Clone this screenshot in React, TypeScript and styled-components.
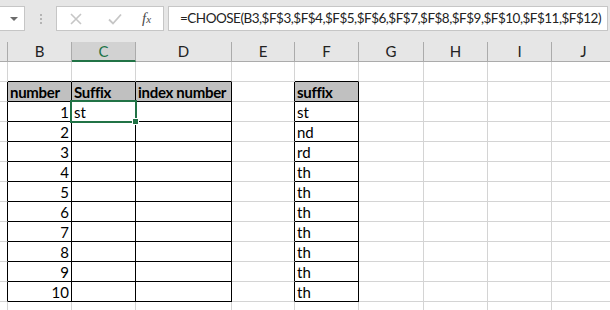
import React from "react";
import styled, { createGlobalStyle } from "styled-components";

const GlobalStyle = createGlobalStyle`
  body {
    margin: 0;
    background: #ffffff;
    font-family: Lato, "Liberation Sans", sans-serif;
    overflow: hidden;
  }
`;

interface ColumnType {
  name: string;
  width: number;
}

const columns: ColumnType[] = [
  { name: "", width: 8 },
  { name: "B", width: 64 },
  { name: "C", width: 64 },
  { name: "D", width: 96 },
  { name: "E", width: 63 },
  { name: "F", width: 64 },
  { name: "G", width: 65 },
  { name: "H", width: 64 },
  { name: "I", width: 64 },
  { name: "J", width: 64 },
];

const suffixes = ["st", "nd", "rd", "th", "th", "th", "th", "th", "th", "th"];

// rows of the sheet, index 0 is the empty row above the table
const rows: string[][] = [
  [],
  ["", "number", "Suffix", "index number", "", "suffix"],
  ...suffixes.map((s, i) => ["", String(i + 1), i === 0 ? "st" : "", "", "", s]),
  [],
];

const tableCols = [1, 2, 3, 5];
const inTable = (r: number, c: number) =>
  r >= 1 && r <= 11 && tableCols.includes(c);

const formula =
  "=CHOOSE(B3,$F$3,$F$4,$F$5,$F$6,$F$7,$F$8,$F$9,$F$10,$F$11,$F$12)";

const App: React.FC = () => {
  return (
    <S.Window>
      <GlobalStyle />
      <S.FormulaBar>
        <S.NameBox>
          <S.DropArrow />
        </S.NameBox>
        <S.Grip>
          <i />
          <i />
          <i />
        </S.Grip>
        <S.ButtonBox>
          <svg width="12" height="12" viewBox="0 0 12 12">
            <path d="M1 1L11 11M11 1L1 11" stroke="#c6c6c6" strokeWidth="1.6" />
          </svg>
          <svg width="14" height="12" viewBox="0 0 14 12">
            <path d="M1 6.5L5 10.5L13 1.5" stroke="#c6c6c6" strokeWidth="1.8" fill="none" />
          </svg>
          <S.Fx>
            f<sub>x</sub>
          </S.Fx>
        </S.ButtonBox>
        <S.FormulaInput>{formula}</S.FormulaInput>
      </S.FormulaBar>
      <S.HeaderRow>
        {columns.map((col, c) => (
          <S.ColumnHeader key={c} $width={col.width} $selected={c === 2}>
            {col.name}
          </S.ColumnHeader>
        ))}
      </S.HeaderRow>
      <S.Sheet>
        {rows.map((row, r) => (
          <S.Row key={r}>
            {columns.map((col, c) => {
              const value = row[c] || "";
              const right = inTable(r, c) || inTable(r, c + 1);
              const bottom = inTable(r, c) || inTable(r + 1, c);
              const isNumber = /^\d+$/.test(value);
              return (
                <S.Cell
                  key={c}
                  $width={col.width}
                  $right={right}
                  $bottom={bottom}
                  $head={r === 1 && inTable(r, c)}
                  $number={isNumber}
                >
                  {value}
                  {r === 2 && c === 2 && (
                    <S.Selection>
                      <S.Handle />
                    </S.Selection>
                  )}
                </S.Cell>
              );
            })}
          </S.Row>
        ))}
      </S.Sheet>
    </S.Window>
  );
};

const S = {
  Window: styled.div`
    width: 610px;
    height: 310px;
    overflow: hidden;
    background: #ffffff;
  `,
  FormulaBar: styled.div`
    display: flex;
    align-items: flex-start;
    height: 42px;
    padding-top: 6px;
    box-sizing: border-box;
    background: #e6e6e6;
  `,
  NameBox: styled.div`
    width: 25px;
    height: 25px;
    box-sizing: border-box;
    background: #ffffff;
    border: 1px solid #c6c6c6;
    border-left: none;
    display: flex;
    align-items: center;
    justify-content: center;
  `,
  DropArrow: styled.span`
    width: 0;
    height: 0;
    margin-left: 4px;
    border-left: 4px solid transparent;
    border-right: 4px solid transparent;
    border-top: 4px solid #6b6b6b;
  `,
  Grip: styled.div`
    width: 31px;
    height: 25px;
    display: flex;
    flex-direction: column;
    align-items: center;
    justify-content: center;
    gap: 2px;
    i {
      width: 2px;
      height: 2px;
      background: #b4b4b4;
    }
  `,
  ButtonBox: styled.div`
    width: 108px;
    height: 25px;
    box-sizing: border-box;
    background: #ffffff;
    border: 1px solid #c6c6c6;
    display: flex;
    align-items: center;
    padding-left: 13px;
    svg:nth-child(2) {
      margin-left: 26px;
    }
  `,
  Fx: styled.span`
    margin-left: 20px;
    font-family: "Liberation Serif", serif;
    font-style: italic;
    font-size: 15px;
    color: #4a4a4a;
    sub {
      font-size: 11px;
      vertical-align: 0;
    }
  `,
  FormulaInput: styled.div`
    flex: 1;
    height: 25px;
    margin-left: 4px;
    margin-right: 2px;
    box-sizing: border-box;
    background: #ffffff;
    border: 1px solid #c6c6c6;
    padding-left: 11px;
    font-size: 13.5px;
    letter-spacing: -0.5px;
    line-height: 23px;
    color: #222222;
    white-space: nowrap;
    overflow: hidden;
  `,
  HeaderRow: styled.div`
    display: flex;
    height: 20px;
    background: #e6e6e6;
  `,
  ColumnHeader: styled.div<{ $width: number; $selected: boolean }>`
    flex: 0 0 ${(p) => p.$width}px;
    box-sizing: border-box;
    border-right: 1px solid #ababab;
    border-bottom: ${(p) => (p.$selected ? "2px solid #217346" : "1px solid #ababab")};
    background: ${(p) => (p.$selected ? "#d2d2d2" : "#e6e6e6")};
    color: ${(p) => (p.$selected ? "#217346" : "#222222")};
    font-size: 15px;
    line-height: 19px;
    text-align: center;
  `,
  Sheet: styled.div`
    display: flex;
    flex-direction: column;
  `,
  Row: styled.div`
    display: flex;
    height: 20px;
  `,
  Cell: styled.div<{
    $width: number;
    $right: boolean;
    $bottom: boolean;
    $head: boolean;
    $number: boolean;
  }>`
    position: relative;
    flex: 0 0 ${(p) => p.$width}px;
    box-sizing: border-box;
    border-right: 1px solid ${(p) => (p.$right ? "#000000" : "#d4d4d4")};
    border-bottom: 1px solid ${(p) => (p.$bottom ? "#000000" : "#d4d4d4")};
    background: ${(p) => (p.$head ? "#c0c0c0" : "#ffffff")};
    font-size: 15px;
    font-weight: ${(p) => (p.$head ? 700 : 400)};
    letter-spacing: ${(p) => (p.$head ? "-0.3px" : "0")};
    line-height: 20px;
    padding: 0 2px;
    color: #000000;
    text-align: ${(p) => (p.$number ? "right" : "left")};
    white-space: nowrap;
  `,
  Selection: styled.div`
    position: absolute;
    z-index: 2;
    top: -2px;
    left: -2px;
    right: -2px;
    bottom: -2px;
    border: 2px solid #217346;
  `,
  Handle: styled.div`
    position: absolute;
    right: -4px;
    bottom: -4px;
    width: 5px;
    height: 5px;
    background: #217346;
    border: 1px solid #ffffff;
  `,
};

export default App;
